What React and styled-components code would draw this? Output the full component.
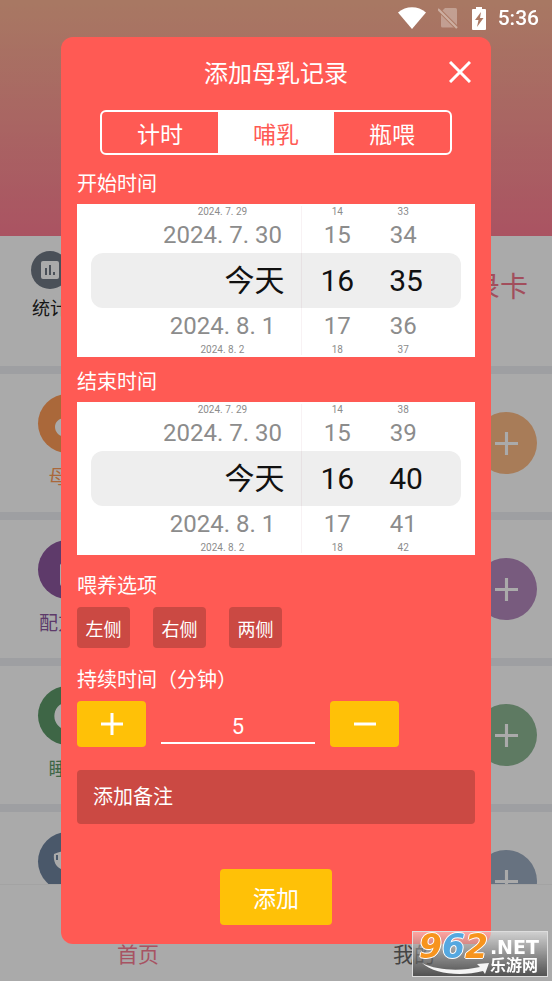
import React, { useState } from 'react';
import styled, { createGlobalStyle } from 'styled-components';

const records = [
    { name: '母乳', icon: 'breast', color: '#ff9d58', light: '#fcba84' },
    { name: '配方奶', icon: 'bottle', color: '#8d57a0', light: '#b489bd' },
    { name: '睡眠', icon: 'sleep', color: '#5d9a6a', light: '#8db794' },
    { name: '换尿布', icon: 'diaper', color: '#6f84a0', light: '#9babc0' },
];

const startRows = [
    ['2024. 7. 29', '14', '33'],
    ['2024. 7. 30', '15', '34'],
    ['今天', '16', '35'],
    ['2024. 8. 1', '17', '36'],
    ['2024. 8. 2', '18', '37'],
];

const endRows = [
    ['2024. 7. 29', '14', '38'],
    ['2024. 7. 30', '15', '39'],
    ['今天', '16', '40'],
    ['2024. 8. 1', '17', '41'],
    ['2024. 8. 2', '18', '42'],
];

const rowKinds = ['edge', 'near', 'selected', 'near', 'edge'];
const rowHeights = { selected: '55px', near: '36px', edge: '11px' };
const rowFonts = { selected: '30px', near: '24px', edge: '10px' };

const RecordIcon = ({ type }) => (
    <svg width="59" height="59" viewBox="0 0 59 59" fill="#fff" aria-hidden="true">
        {type === 'breast' && <path d="M27 24c-6 0-10 4-10 9s4 10 12 10 14-5 14-13-6-14-12-14c4 4 1 8-4 8z" />}
        {type === 'bottle' && <path d="M26 13h8v6l4 6v18a4 4 0 0 1-4 4h-8a4 4 0 0 1-4-4V25l4-6z" />}
        {type === 'sleep' && <path d="M31 16a14 14 0 1 0 12 20A13 13 0 0 1 31 16z" />}
        {type === 'diaper' && (
            <>
                <path d="M16 22c8-4 20-4 28 0 0 10-4 16-12 16-4 0-6-1-9-1-5-2-8-8-7-15z" />
                <path d="M19 23v5M24 22v5M29 21v5" stroke="#6f84a0" strokeWidth="2" />
            </>
        )}
    </svg>
);

const Plus = ({ size, stroke }) => (
    <svg width={size} height={size} viewBox="0 0 22 22" stroke="currentColor" strokeWidth={stroke} aria-hidden="true">
        <path d="M11 0v22M0 11h22" />
    </svg>
);

const TimeWheel = ({ label, rows }) => (
    <Wheel role="group" aria-label={label}>
        {rows.map((row, i) => (
            <WheelRow key={row[0]} $kind={rowKinds[i]}>
                <DateCell><DateText $selected={rowKinds[i] === 'selected'}>{row[0]}</DateText></DateCell>
                <HourCell>{row[1]}</HourCell>
                <MinuteCell><MinuteText>{row[2]}</MinuteText></MinuteCell>
            </WheelRow>
        ))}
    </Wheel>
);

const App = () => {
    const [tab, setTab] = useState('哺乳');
    const [minutes, setMinutes] = useState(5);

    const handleIncrement = () => {
        setMinutes(prev => Number(prev) + 1);
    };

    const handleDecrement = () => {
        if (minutes > 1) {
            setMinutes(prev => Number(prev) - 1);
        }
    };

    return (
        <>
            <GlobalStyle />
            <Page>
                <Hero>
                    <StatusBar>
                        <svg width="28" height="22" viewBox="0 0 28 22" aria-hidden="true">
                            <path d="M0 5.5C8-1.5 20-1.5 28 5.5L14 22z" fill="#fff" />
                        </svg>
                        <svg width="22" height="22" viewBox="0 0 22 22" aria-hidden="true">
                            <path d="M7 1h10.500q1.500 0 1.500 1.500V20.500H4.500q-1.500 0-1.500-1.500V5z" fill="#fff" opacity=".3" />
                            <path d="M1 3l18 18" stroke="#ac7a65" strokeWidth="4" />
                            <path d="M0 2l19 19" stroke="#fff" strokeWidth="2" opacity=".4" />
                        </svg>
                        <svg width="14" height="23" viewBox="0 0 14 23" aria-hidden="true">
                            <path d="M4 0h6v2h3q1 0 1 1v19q0 1-1 1H1q-1 0-1-1V3q0-1 1-1h3z" fill="#fff" />
                            <path d="M9 5L3 13h3.500L5 20 11.500 11H8z" fill="#ac7a65" />
                        </svg>
                        <Clock>5:36</Clock>
                    </StatusBar>
                </Hero>
                <Content>
                    <Summary>
                        <Stat>
                            <StatIcon>
                                <svg width="18" height="18" viewBox="0 0 18 18" aria-hidden="true">
                                    <rect width="18" height="18" rx="2" fill="#fff" />
                                    <path d="M5 7v7M9 4v10M13 11v3" stroke="#6f7885" strokeWidth="2" />
                                </svg>
                            </StatIcon>
                            统计
                        </Stat>
                        <CardLink href="#card">记录卡</CardLink>
                    </Summary>
                    {records.map(item => (
                        <Record key={item.name}>
                            <RecordType $color={item.color}>
                                <RecordCircle $color={item.color}><RecordIcon type={item.icon} /></RecordCircle>
                                {item.name}
                            </RecordType>
                            <RoundButton $color={item.light} aria-label={item.name}><Plus size={23} stroke={3} /></RoundButton>
                        </Record>
                    ))}
                </Content>
                <BottomNav>
                    <NavButton $active>首页</NavButton>
                    <NavButton>我的</NavButton>
                </BottomNav>
            </Page>

            <Overlay>
                <Dialog role="dialog" aria-labelledby="dialog-title">
                    <DialogHeader>
                        <Title id="dialog-title">添加母乳记录</Title>
                        <CloseButton aria-label="关闭">
                            <svg width="22" height="22" viewBox="0 0 22 22" stroke="#fff" strokeWidth="3" aria-hidden="true">
                                <path d="M1 1l20 20M21 1L1 21" />
                            </svg>
                        </CloseButton>
                    </DialogHeader>
                    <Tabs role="tablist">
                        {['计时', '哺乳', '瓶喂'].map(name => (
                            <Tab key={name} role="tab" aria-selected={tab === name} $active={tab === name} onClick={() => setTab(name)}>
                                {name}
                            </Tab>
                        ))}
                    </Tabs>

                    <Label>开始时间</Label>
                    <TimeWheel label="开始时间" rows={startRows} />

                    <Label>结束时间</Label>
                    <TimeWheel label="结束时间" rows={endRows} />

                    <OptionLabel>喂养选项</OptionLabel>
                    <Sides>
                        <SideButton>左侧</SideButton>
                        <SideButton>右侧</SideButton>
                        <SideButton>两侧</SideButton>
                    </Sides>

                    <OptionLabel as="label" htmlFor="minutes">持续时间（分钟）</OptionLabel>
                    <Stepper>
                        <StepButton aria-label="增加" onClick={handleIncrement}><Plus size={22} stroke={3} /></StepButton>
                        <MinutesInput id="minutes" inputMode="numeric" value={minutes} onChange={e => setMinutes(e.target.value)} />
                        <StepButton aria-label="减少" onClick={handleDecrement}>
                            <svg width="22" height="22" viewBox="0 0 22 22" stroke="currentColor" strokeWidth="3" aria-hidden="true">
                                <path d="M0 11h22" />
                            </svg>
                        </StepButton>
                    </Stepper>

                    <Note placeholder="添加备注" aria-label="添加备注" />
                    <SubmitButton>添加</SubmitButton>
                </Dialog>
            </Overlay>

            <Watermark>
                <svg width="135" height="45" viewBox="0 0 135 45" aria-hidden="true">
                    <path d="M9 31c16 8 40 8 58 4l-3-3 12-1-4 11-2-3c-22 6-49 3-61-8z" fill="#f4f4f4" />
                </svg>
                <Digits>9<BlueDigit>6</BlueDigit>2</Digits>
                <Site>
                    <SiteDomain>.NET</SiteDomain>
                    <SiteName>乐游网</SiteName>
                </Site>
            </Watermark>
        </>
    );
};

const GlobalStyle = createGlobalStyle`
    * {
        box-sizing: border-box;
    }

    body {
        margin: 0;
        font-family: Roboto, "Noto Sans CJK SC", sans-serif;
        background: #fff;
    }

    button, input {
        font-family: inherit;
        border: none;
        padding: 0;
        margin: 0;
    }

    button {
        cursor: pointer;
    }
`;

const Page = styled.div`
    height: 100vh;
    display: flex;
    flex-direction: column;
    overflow: hidden;
`;

const Hero = styled.header`
    height: 236px;
    flex-shrink: 0;
    background: linear-gradient(#fdb595, #ff7d94);
`;

const StatusBar = styled.div`
    position: relative;
    z-index: 2;
    height: 36px;
    padding-right: 13px;
    display: flex;
    align-items: center;
    justify-content: flex-end;
    gap: 12px;
`;

const Clock = styled.span`
    color: #fff;
    font-size: 21px;
    font-weight: 500;
`;

const Content = styled.main`
    flex: 1;
    min-height: 0;
    overflow: hidden;
`;

const Summary = styled.section`
    height: 130px;
    padding: 15px 24px 0 31px;
    display: flex;
    justify-content: space-between;
    align-items: flex-start;
`;

const Stat = styled.div`
    display: flex;
    flex-direction: column;
    align-items: center;
    gap: 5px;
    font-size: 18px;
    color: #222;
`;

const StatIcon = styled.div`
    width: 38px;
    height: 38px;
    border-radius: 50%;
    background: #6f7885;
    display: flex;
    align-items: center;
    justify-content: center;
`;

const CardLink = styled.a`
    margin-top: 17px;
    font-size: 28px;
    line-height: 40px;
    color: #f4758a;
    text-decoration: none;
`;

const Record = styled.section`
    height: 146px;
    padding: 0 15px 0 38px;
    border-top: 8px solid #eeeff4;
    display: flex;
    align-items: center;
    justify-content: space-between;
`;

const RecordType = styled.div`
    width: 59px;
    display: flex;
    flex-direction: column;
    align-items: center;
    gap: 10px;
    font-size: 19px;
    line-height: 30px;
    white-space: nowrap;
    color: ${props => props.$color};
`;

const RecordCircle = styled.div`
    width: 59px;
    height: 59px;
    border-radius: 50%;
    overflow: hidden;
    background: ${props => props.$color};
`;

const RoundButton = styled.button`
    width: 62px;
    height: 62px;
    border-radius: 50%;
    color: #fff;
    background: ${props => props.$color};
    display: flex;
    align-items: center;
    justify-content: center;
`;

const BottomNav = styled.nav`
    height: 97px;
    flex-shrink: 0;
    display: flex;
    border-top: 1px solid #f5f5f5;
`;

const NavButton = styled.button`
    flex: 1;
    padding-top: 40px;
    font-size: 21px;
    background: #fff;
    color: ${props => props.$active ? '#fb7d94' : '#666'};
`;

const Overlay = styled.div`
    position: fixed;
    inset: 0;
    z-index: 1;
    padding: 0 61px;
    display: flex;
    align-items: center;
    justify-content: center;
    background: rgba(0, 0, 0, 0.333);
`;

const Dialog = styled.div`
    flex: 1;
    max-width: 520px;
    padding: 0 16px 19px;
    border-radius: 12px;
    background: #ff5a54;
    color: #fff;
    display: flex;
    flex-direction: column;
`;

const DialogHeader = styled.div`
    height: 73px;
    padding-bottom: 4px;
    display: grid;
    grid-template-columns: 30px 1fr 30px;
    align-items: center;
`;

const Title = styled.h1`
    grid-column: 2;
    margin: 0;
    font-size: 24px;
    font-weight: 400;
    text-align: center;
`;

const CloseButton = styled.button`
    height: 26px;
    background: none;
    display: flex;
    align-items: center;
    justify-content: center;
`;

const Tabs = styled.div`
    height: 45px;
    margin: 0 23px 10px;
    border: 2px solid #fff;
    border-radius: 6px;
    overflow: hidden;
    display: flex;
`;

const Tab = styled.button`
    flex: 1;
    font-size: 23px;
    color: ${props => props.$active ? '#ff5a54' : '#fff'};
    background: ${props => props.$active ? '#fff' : 'transparent'};
`;

const Label = styled.div`
    font-size: 20px;
    line-height: 39px;
`;

const OptionLabel = styled.div`
    padding-top: 4px;
    font-size: 20px;
    line-height: 42px;
`;

const Wheel = styled.div`
    height: 153px;
    padding: 0 14px;
    margin-bottom: 6px;
    background: #fff;
    display: flex;
    flex-direction: column;
    justify-content: center;
`;

const WheelRow = styled.div`
    display: grid;
    grid-template-columns: 212fr 70fr 89fr;
    font-size: ${props => rowFonts[props.$kind]};
    line-height: ${props => rowHeights[props.$kind]};
    color: ${props => props.$kind === 'selected' ? '#111' : '#8c8c8c'};
    background: ${props => props.$kind === 'selected' ? '#eee' : 'transparent'};
    border-radius: ${props => props.$kind === 'selected' ? '12px' : '0'};
    height: ${props => rowHeights[props.$kind]};
`;

const DateCell = styled.div`
    padding-right: 17px;
    border-right: 1px solid rgba(120, 0, 40, 0.05);
    display: flex;
    justify-content: flex-end;
`;

const DateText = styled.span`
    min-width: 124px;
    white-space: nowrap;
    text-align: ${props => props.$selected ? 'right' : 'center'};
`;

const HourCell = styled.div`
    text-align: center;
`;

const MinuteCell = styled.div`
    padding-left: 17px;
`;

const MinuteText = styled.span`
    display: inline-block;
    min-width: 28px;
    text-align: center;
`;

const Sides = styled.div`
    display: flex;
    gap: 23px;
    margin-bottom: 7px;
`;

const SideButton = styled.button`
    width: 53px;
    height: 41px;
    border-radius: 4px;
    font-size: 18px;
    color: #fff;
    background: #cb4943;
`;

const Stepper = styled.div`
    display: flex;
    gap: 15px;
    margin-bottom: 23px;
`;

const StepButton = styled.button`
    width: 69px;
    height: 46px;
    border-radius: 4px;
    color: #fff;
    background: #ffc107;
    display: flex;
    align-items: center;
    justify-content: center;
`;

const MinutesInput = styled.input`
    width: 154px;
    height: 33px;
    margin-top: 10px;
    border-bottom: 2px solid #fff;
    border-radius: 0;
    outline: none;
    text-align: center;
    font-size: 22px;
    color: #fff;
    background: none;
`;

const Note = styled.input`
    width: 100%;
    height: 54px;
    padding: 0 16px;
    border-radius: 4px;
    outline: none;
    font-size: 20px;
    color: #fff;
    background: #cb4943;

    &::placeholder {
        color: #fff;
        opacity: 1;
    }
`;

const SubmitButton = styled.button`
    align-self: center;
    width: 112px;
    height: 56px;
    margin-top: 45px;
    border-radius: 4px;
    font-size: 23px;
    color: #fff;
    background: #ffc107;
`;

const Watermark = styled.div`
    position: fixed;
    right: 4px;
    bottom: 4px;
    z-index: 3;
    width: 136px;
    height: 46px;
    padding-left: 6px;
    border: 1px solid #ddd;
    background: linear-gradient(rgba(255, 255, 255, 0.45), rgba(60, 60, 60, 0.8));
    display: flex;
    gap: 2px;

    svg {
        position: absolute;
        left: 0;
        top: 0;
    }
`;

const Digits = styled.div`
    font: italic bold 33px/30px "DejaVu Sans", sans-serif;
    color: #f7941d;
    text-shadow: 1px 0 #fff, -1px 0 #fff, 0 1px #fff, 0 -1px #fff;
`;

const BlueDigit = styled.span`
    color: #55a8e0;
`;

const Site = styled.div`
    display: flex;
    flex-direction: column;
    padding-top: 4px;
    color: #fff;
    font-weight: bold;
`;

const SiteDomain = styled.span`
    font: bold 19px/22px "DejaVu Sans", sans-serif;
`;

const SiteName = styled.span`
    font-size: 16px;
    line-height: 16px;
`;

export default App;
